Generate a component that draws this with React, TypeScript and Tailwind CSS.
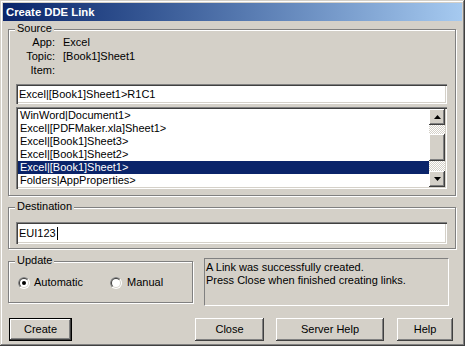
import { useId } from "react";

const sunken =
  "shadow-[inset_1px_1px_#808080,inset_2px_2px_#404040,inset_-1px_-1px_#ffffff,inset_-2px_-2px_#d4d0c8]";
const raised =
  "shadow-[inset_-1px_-1px_#404040,inset_1px_1px_#ffffff,inset_-2px_-2px_#808080,inset_2px_2px_#d4d0c8]";
const etched = "border border-[#808080] shadow-[inset_1px_1px_#ffffff,1px_1px_#ffffff]";

function Group({ label, className, children }: { label: string; className: string; children?: React.ReactNode }) {
  return (
    <div className={`relative ${etched} ${className}`}>
      <span className="absolute -top-[8px] left-[6px] bg-[#d4d0c8] px-[2px] leading-[13px]">{label}</span>
      {children}
    </div>
  );
}

function Radio({ checked }: { checked?: boolean }) {
  const id = useId();
  return (
    <svg width="12" height="12" viewBox="0 0 12 12">
      <defs>
        <clipPath id={id}>
          <polygon points="0,0 12,0 0,12" />
        </clipPath>
      </defs>
      <circle cx="6" cy="6" r="6" fill="#ffffff" />
      <circle cx="6" cy="6" r="6" fill="#808080" clipPath={`url(#${id})`} />
      <circle cx="6" cy="6" r="5" fill="#d4d0c8" />
      <circle cx="6" cy="6" r="5" fill="#404040" clipPath={`url(#${id})`} />
      <circle cx="6" cy="6" r="4" fill="#ffffff" />
      {checked && <circle cx="6" cy="6" r="2" fill="#000000" />}
    </svg>
  );
}

function Arrow({ down }: { down?: boolean }) {
  return (
    <svg width="7" height="4" viewBox="0 0 7 4">
      <polygon points={down ? "0,0 7,0 3.5,4" : "0,4 7,4 3.5,0"} fill="#000" />
    </svg>
  );
}

const items = [
  "WinWord|Document1>",
  "Excel|[PDFMaker.xla]Sheet1>",
  "Excel|[Book1]Sheet3>",
  "Excel|[Book1]Sheet2>",
  "Excel|[Book1]Sheet1>",
  "Folders|AppProperties>",
];

function Button({ label, className, isDefault }: { label: string; className: string; isDefault?: boolean }) {
  return (
    <div
      className={`flex h-[23px] items-center justify-center ${className} ${
        isDefault
          ? "border border-black shadow-[inset_-1px_-1px_#404040,inset_1px_1px_#ffffff,inset_-2px_-2px_#808080]"
          : raised
      }`}
    >
      {label}
    </div>
  );
}

export default function App() {
  return (
    <div className="flex h-[346px] w-[465px] flex-col bg-[#d4d0c8] p-[3px] font-['Liberation_Sans',Arial,sans-serif] text-[11px] leading-[13px] text-black shadow-[inset_-1px_-1px_#404040,inset_1px_1px_#d4d0c8,inset_-2px_-2px_#808080,inset_2px_2px_#ffffff]">
      <div className="flex h-[18px] items-center bg-gradient-to-r from-[#0a246a] to-[#a6caf0] pl-[3px] text-[11.3px] font-bold text-white">
        Create DDE Link
      </div>

      <div className="flex flex-col pl-[5px]">
        <Group label="Source" className="mt-[8px] h-[167px] w-[448px]">
          <div className="flex flex-col pt-[5px]">
            {[
              ["App:", "Excel"],
              ["Topic:", "[Book1]Sheet1"],
              ["Item:", ""],
            ].map(([k, v]) => (
              <div key={k} className="flex h-[14px] items-center">
                <span className="w-[46px] text-right">{k}</span>
                <span className="ml-[8px]">{v}</span>
              </div>
            ))}
          </div>
          <div className={`ml-[7px] mt-[7px] flex h-[20px] w-[431px] items-center bg-white pl-[3px] ${sunken}`}>
            Excel|[Book1]Sheet1&gt;R1C1
          </div>
          <div className={`ml-[7px] mt-[3px] flex h-[82px] w-[431px] bg-white p-[2px] ${sunken}`}>
            <div className="flex flex-1 flex-col">
              {items.map((t, i) => (
                <div
                  key={t}
                  className={`flex h-[13px] items-center pl-[2px] ${i === 4 ? "bg-[#0a246a] text-white" : ""}`}
                >
                  {t}
                </div>
              ))}
            </div>
            <div className="flex w-[16px] flex-col">
              <div className={`flex h-[16px] items-center justify-center bg-[#d4d0c8] ${raised}`}>
                <Arrow />
              </div>
              <div className="flex flex-1 flex-col bg-[repeating-conic-gradient(#d4d0c8_0_25%,#ffffff_0_50%)] bg-[length:2px_2px]">
                <div className={`mt-[9px] h-[27px] bg-[#d4d0c8] ${raised}`} />
              </div>
              <div className={`flex h-[16px] items-center justify-center bg-[#d4d0c8] ${raised}`}>
                <Arrow down />
              </div>
            </div>
          </div>
        </Group>

        <Group label="Destination" className="mt-[11px] h-[42px] w-[448px]">
          <div className={`ml-[7px] mt-[14px] flex h-[22px] w-[431px] items-center bg-white pl-[3px] ${sunken}`}>
            EUI123
            <span className="ml-[1px] h-[13px] w-[1px] bg-black" />
          </div>
        </Group>

        <div className="mt-[9px] flex items-start">
          <Group label="Update" className="mt-[3px] h-[42px] w-[185px]">
            <div className="flex items-center pl-[9px] pt-[14px]">
              <div className="flex w-[92px] items-center gap-[4px]">
                <Radio checked />
                <span>Automatic</span>
              </div>
              <div className="flex items-center gap-[5px]">
                <Radio />
                <span>Manual</span>
              </div>
            </div>
          </Group>
          <div className="ml-[11px] h-[48px] w-[245px] border-b border-l border-r border-t border-b-white border-l-[#808080] border-r-white border-t-[#808080] pl-[1px] pt-[2px]">
            <div>A Link was successfully created.</div>
            <div>Press Close when finished creating links.</div>
          </div>
        </div>

        <div className="mt-[12px] flex">
          <Button label="Create" className="ml-[1px] w-[63px]" isDefault />
          <Button label="Close" className="ml-[123px] w-[69px]" />
          <Button label="Server Help" className="ml-[12px] w-[108px]" />
          <Button label="Help" className="ml-[13px] w-[56px]" />
        </div>
      </div>
    </div>
  );
}
